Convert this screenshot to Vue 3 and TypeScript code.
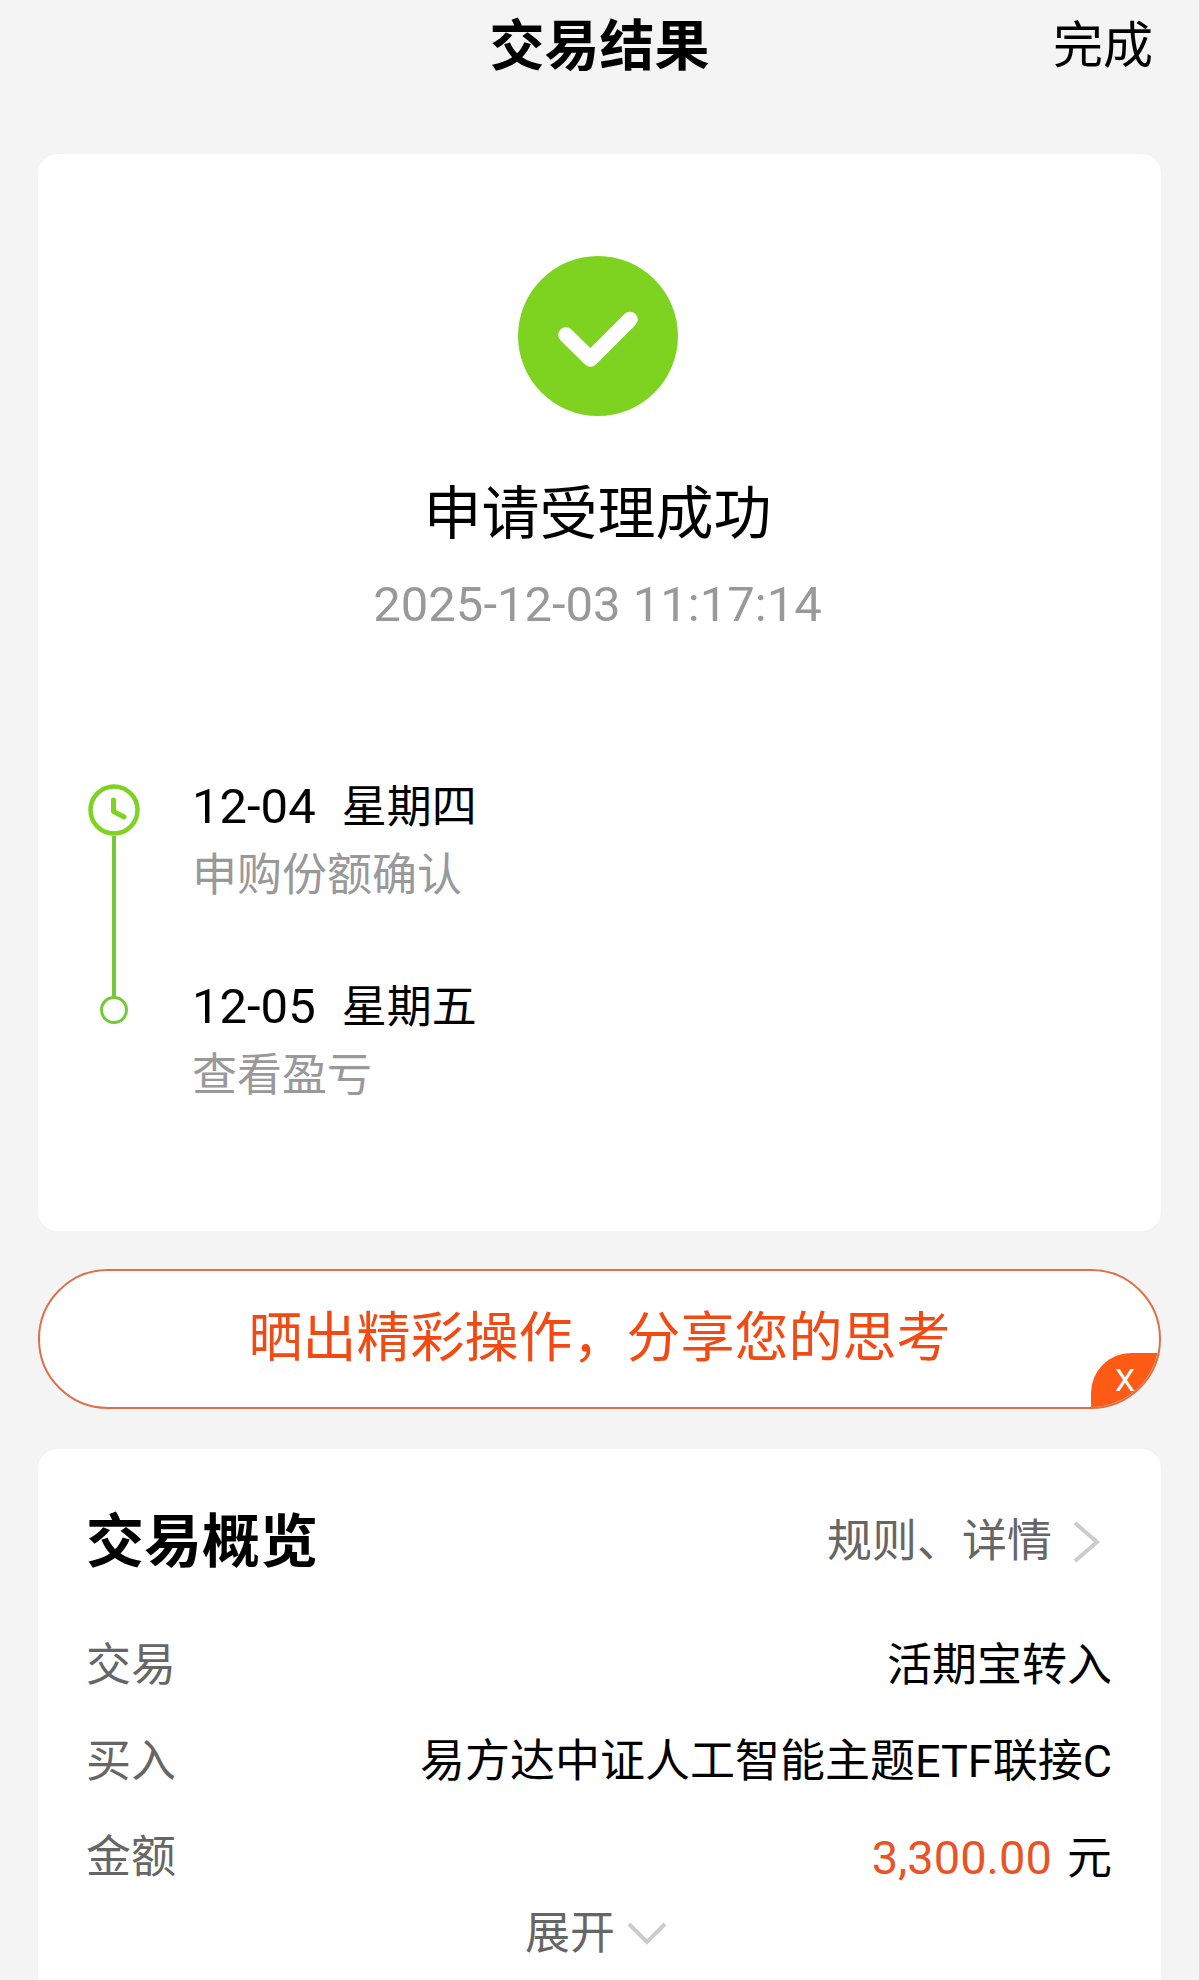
<script setup lang="ts">
import { ref } from 'vue'

interface Step {
  date: string
  weekday: string
  label: string
}

const steps: Step[] = [
  { date: '12-04', weekday: '星期四', label: '申购份额确认' },
  { date: '12-05', weekday: '星期五', label: '查看盈亏' },
]

const shareVisible = ref(true)
</script>

<template>
  <div class="page">
    <header class="topbar">
      <h1 class="topbar-title">交易结果</h1>
      <button class="topbar-done" type="button">完成</button>
    </header>

    <main class="content">
      <section class="card result">
        <svg class="result-icon" viewBox="0 0 160 160" aria-hidden="true">
          <circle cx="80" cy="80" r="80" fill="#7ed321" />
          <path d="M48 79 L72.500 103 L112 63.500" fill="none" stroke="#fff" stroke-width="15.500" stroke-linecap="round" stroke-linejoin="round" />
        </svg>
        <h2 class="result-title">申请受理成功</h2>
        <time class="result-time">2025-12-03 11:17:14</time>

        <ol class="timeline">
          <li v-for="(step, i) in steps" :key="step.date" class="step">
            <div class="marker" :class="{ first: i === 0 }">
              <template v-if="i === 0">
                <svg class="clock" viewBox="0 0 52 52" aria-hidden="true">
                  <circle cx="26" cy="26" r="23.500" fill="none" stroke="#7ed321" stroke-width="4.500" />
                  <path d="M25.500 16 V27.500 L36 33" fill="none" stroke="#7ed321" stroke-width="5" stroke-linecap="round" stroke-linejoin="round" />
                </svg>
                <span class="line"></span>
              </template>
              <template v-else>
                <span class="line short"></span>
                <span class="dot"></span>
              </template>
            </div>
            <div class="step-text">
              <p class="step-date"><span class="step-day">{{ step.date }}</span><span>{{ step.weekday }}</span></p>
              <p class="step-label">{{ step.label }}</p>
            </div>
          </li>
        </ol>
      </section>

      <div v-if="shareVisible" class="share">
        <button class="share-main" type="button">晒出精彩操作，分享您的思考</button>
        <button class="share-close" type="button" aria-label="关闭" @click="shareVisible = false">X</button>
      </div>

      <section class="card overview">
        <div class="overview-head">
          <h2 class="overview-title">交易概览</h2>
          <a class="overview-link" href="#">
            规则、详情
            <svg class="chevron-right" viewBox="0 0 28 44" aria-hidden="true">
              <path d="M3 3 L25 22 L3 41" fill="none" stroke="#ccc" stroke-width="4" />
            </svg>
          </a>
        </div>
        <dl class="rows">
          <div class="row">
            <dt>交易</dt>
            <dd>活期宝转入</dd>
          </div>
          <div class="row">
            <dt>买入</dt>
            <dd>易方达中证人工智能主题ETF联接C</dd>
          </div>
          <div class="row">
            <dt>金额</dt>
            <dd><span class="amount">3,300.00</span> 元</dd>
          </div>
        </dl>
        <button class="expand" type="button">
          展开
          <svg class="chevron-down" viewBox="0 0 40 24" aria-hidden="true">
            <path d="M2 2 L20 20 L38 2" fill="none" stroke="#ccc" stroke-width="4" />
          </svg>
        </button>
      </section>
    </main>
  </div>
</template>

<style>
body {
  margin: 0;
  background: #f4f4f4;
}
</style>

<style scoped>
.page {
  box-sizing: border-box;
  display: flex;
  flex-direction: column;
  min-height: 100vh;
  border-right: 1px solid #d6d6d6;
  background: #f4f4f4;
  color: #000;
  font-family: Roboto, "Noto Sans CJK SC", sans-serif;
  font-size: 45px;
}

h1,
h2,
p,
ol,
dl,
dd {
  margin: 0;
  padding: 0;
}

button {
  padding: 0;
  border: 0;
  background: none;
  color: inherit;
  font: inherit;
  cursor: pointer;
}

.topbar {
  display: grid;
  grid-template-columns: 1fr auto 1fr;
  align-items: center;
  height: 92px;
  margin-bottom: 62px;
  padding: 0 46px;
}

.topbar-title {
  grid-column: 2;
  font-size: 55px;
  font-weight: 700;
  line-height: 80px;
}

.topbar-done {
  justify-self: end;
  font-size: 50px;
  line-height: 80px;
}

.content {
  flex: 1;
  display: flex;
  flex-direction: column;
  padding: 0 38px;
}

.card {
  border-radius: 20px;
  background: #fff;
}

.result {
  display: flex;
  flex-direction: column;
  align-items: center;
  padding: 102px 54px 54px 50px;
}

.result-icon {
  width: 160px;
  height: 160px;
}

.result-title {
  margin-top: 58px;
  font-size: 58px;
  font-weight: 400;
  line-height: 80px;
}

.result-time {
  margin-top: 21px;
  color: #999;
  font-size: 49px;
  line-height: 60px;
}

.timeline {
  align-self: stretch;
  margin-top: 142px;
  list-style: none;
}

.step {
  display: flex;
  gap: 52px;
  height: 200px;
}

.marker {
  display: flex;
  flex-direction: column;
  align-items: center;
  width: 52px;
}

.marker.first {
  padding-top: 7px;
}

.clock {
  flex: none;
  width: 52px;
  height: 52px;
}

.line {
  flex: 1;
  width: 4px;
  background: #74c93a;
}

.line.short {
  flex: none;
  height: 19px;
}

.dot {
  box-sizing: border-box;
  width: 28px;
  height: 28px;
  border: 3px solid #74c93a;
  border-radius: 50%;
}

.step-date {
  display: flex;
  align-items: baseline;
  gap: 26px;
  line-height: 60px;
}

.step-day {
  font-size: 49px;
}

.step-label {
  margin-top: 8px;
  color: #999;
  line-height: 60px;
}

.share {
  position: relative;
  display: flex;
  height: 136px;
  margin: 38px 0 40px;
  overflow: hidden;
  border: 2px solid #dd7048;
  border-radius: 70px;
  background: #fff;
}

.share-main {
  flex: 1;
  color: #f24a12;
  font-size: 54px;
  line-height: 80px;
}

.share-close {
  position: absolute;
  right: 0;
  bottom: 0;
  width: 68px;
  height: 54px;
  border-top-left-radius: 40px;
  background: #fc5a15;
  color: #fff;
  font-size: 32px;
}

.overview {
  flex: 1;
  padding: 53px 49px 20px 48px;
  border-bottom-left-radius: 0;
  border-bottom-right-radius: 0;
}

.overview-head {
  display: flex;
  align-items: center;
  justify-content: space-between;
  margin-bottom: 36px;
}

.overview-title {
  font-size: 58px;
  font-weight: 700;
  line-height: 80px;
}

.overview-link {
  display: flex;
  align-items: center;
  gap: 20px;
  padding-right: 12px;
  color: #666;
  line-height: 80px;
  text-decoration: none;
}

.chevron-right {
  width: 28px;
  height: 44px;
}

.row {
  display: flex;
  justify-content: space-between;
  line-height: 96px;
}

.row dt {
  color: #666;
}

.amount {
  margin-right: 4px;
  color: #ea5424;
  font-size: 47px;
}

.expand {
  display: flex;
  align-items: center;
  gap: 12px;
  margin: 0 auto;
  padding-right: 6px;
  color: #666;
  line-height: 54px;
}

.chevron-down {
  width: 40px;
  height: 24px;
}
</style>
